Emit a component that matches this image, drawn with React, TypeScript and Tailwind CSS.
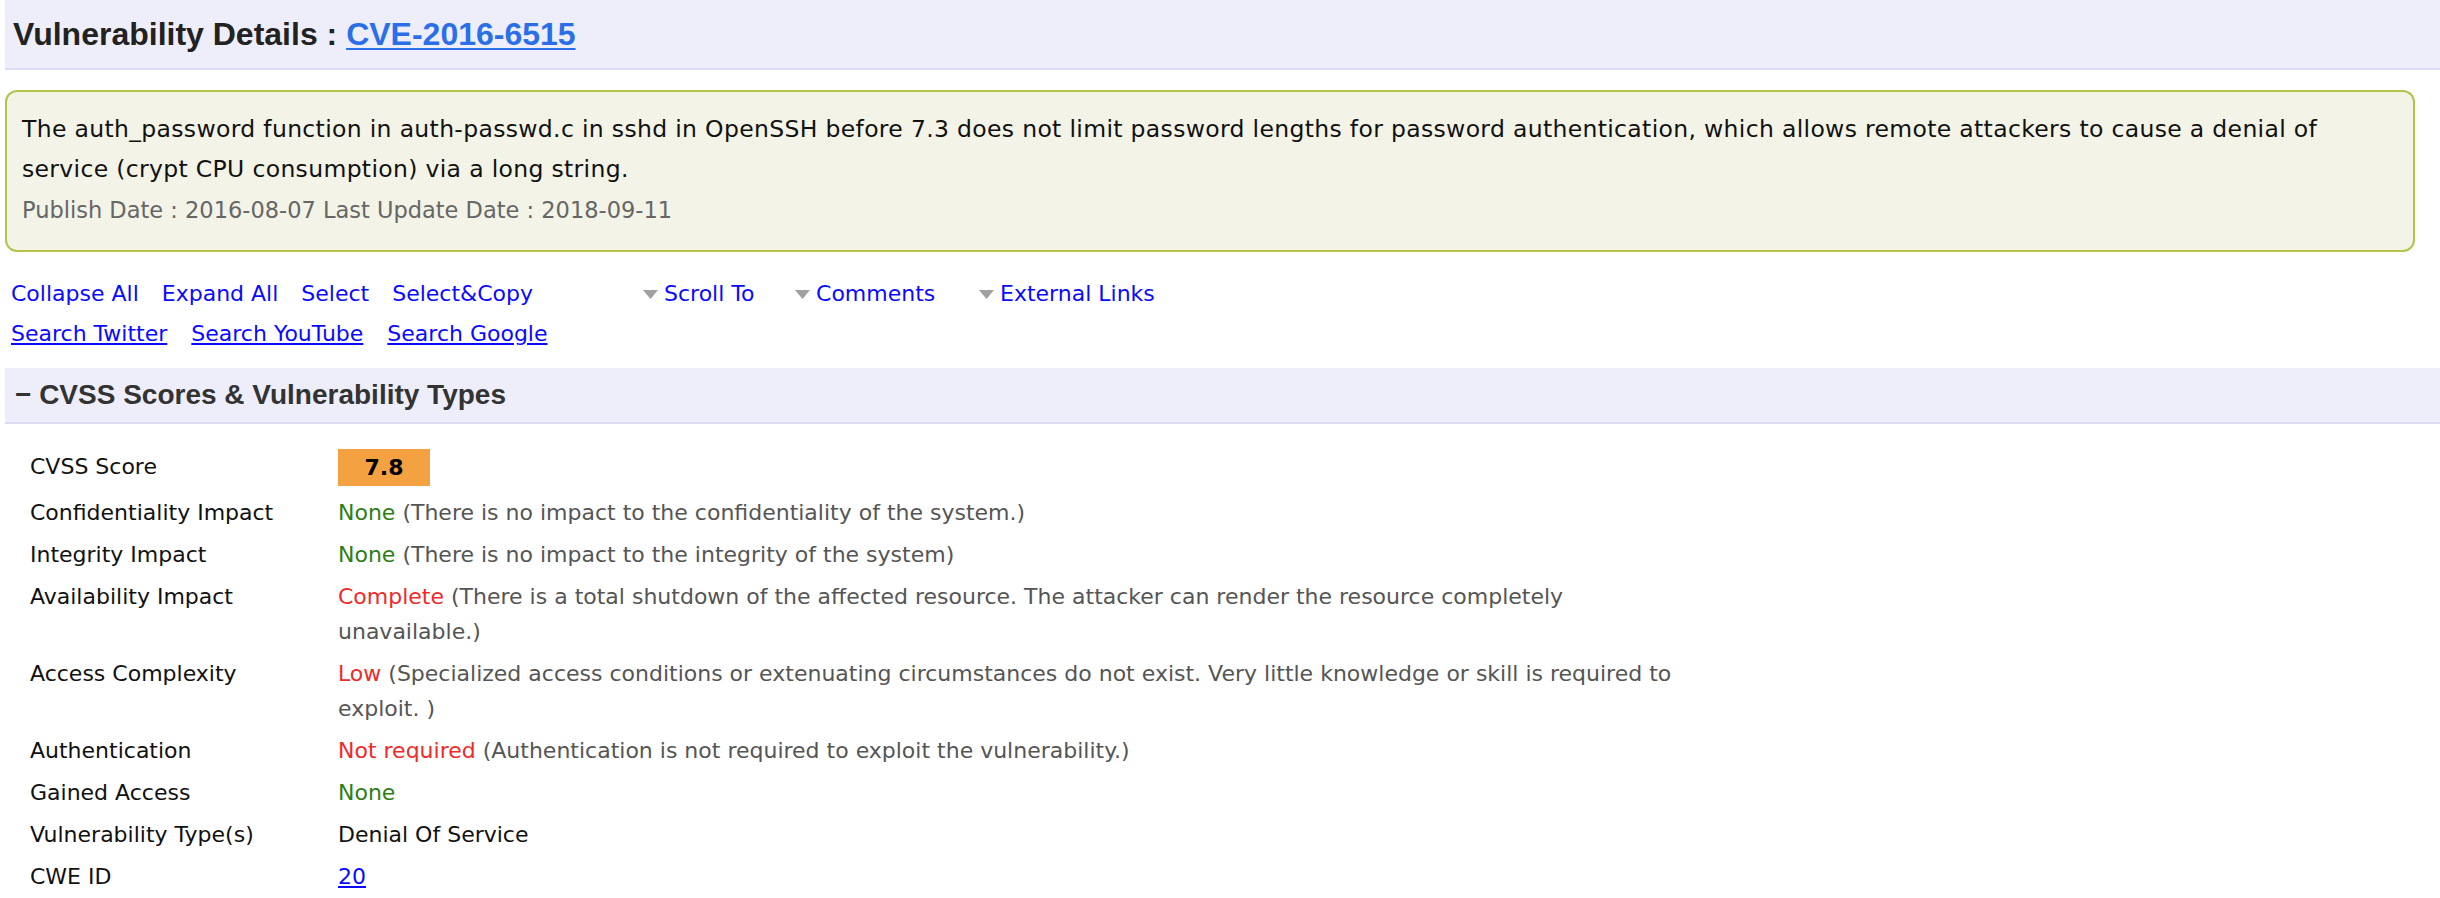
import React from "react";

const Tri = () => (
  <svg width="15" height="9" viewBox="0 0 15 9" className="mr-[6px] shrink-0">
    <polygon points="0,0 15,0 7.5,9" fill="#a0a0a0" />
  </svg>
);

type Row = { label: string; value: React.ReactNode };

const rows: Row[] = [
  {
    label: "Confidentiality Impact",
    value: (
      <>
        <span className="text-[#2e7d16]">None</span> (There is no impact to the confidentiality of the system.)
      </>
    ),
  },
  {
    label: "Integrity Impact",
    value: (
      <>
        <span className="text-[#2e7d16]">None</span> (There is no impact to the integrity of the system)
      </>
    ),
  },
  {
    label: "Availability Impact",
    value: (
      <>
        <span className="text-[#ee2a2a]">Complete</span> (There is a total shutdown of the affected resource. The attacker can render the resource completely unavailable.)
      </>
    ),
  },
  {
    label: "Access Complexity",
    value: (
      <>
        <span className="text-[#ee2a2a]">Low</span> (Specialized access conditions or extenuating circumstances do not exist. Very little knowledge or skill is required to exploit. )
      </>
    ),
  },
  {
    label: "Authentication",
    value: (
      <>
        <span className="text-[#ee2a2a]">Not required</span> (Authentication is not required to exploit the vulnerability.)
      </>
    ),
  },
  {
    label: "Gained Access",
    value: <span className="text-[#2e7d16]">None</span>,
  },
  {
    label: "Vulnerability Type(s)",
    value: <span className="text-[#111]">Denial Of Service</span>,
  },
  {
    label: "CWE ID",
    value: (
      <a href="#" className="text-[#0a0aff] underline">
        20
      </a>
    ),
  },
];

export default function App() {
  return (
    <div className="min-h-screen bg-white pl-[5px] font-['DejaVu_Sans',Verdana,sans-serif] text-[22px] text-[#111]">
      {/* Title bar */}
      <div className="flex h-[70px] items-center border-b-2 border-[#dcdcf5] bg-[#eeeefa] pl-[8px]">
        <h1 className="font-['Liberation_Sans',Arial,sans-serif] text-[32px] font-bold leading-none text-[#222]">
          Vulnerability Details :{" "}
          <a href="#" className="text-[#2a6fe8] underline decoration-2 underline-offset-[3px]">
            CVE-2016-6515
          </a>
        </h1>
      </div>

      {/* Summary box */}
      <div className="mr-[25px] mt-[20px] rounded-[12px] border-2 border-[#b4c44a] bg-[#f3f3e8] pb-[19px] pl-[15px] pr-[60px] pt-[17px]">
        <div className="text-[23.5px] leading-[40px] tracking-[0.33px] text-[#111]">
          The auth_password function in auth-passwd.c in sshd in OpenSSH before 7.3 does not limit password lengths for password authentication, which allows remote attackers to cause a denial of service (crypt CPU consumption) via a long string.
        </div>
        <div className="text-[22.5px] leading-[42px] text-[#666]">
          Publish Date : 2016-08-07 Last Update Date : 2018-09-11
        </div>
      </div>

      {/* Links */}
      <div className="mt-[22px] pl-[6px] leading-[40px] text-[#0a0aff]">
        <div className="flex items-center">
          <a href="#" className="mr-[23px]">Collapse All</a>
          <a href="#" className="mr-[23px]">Expand All</a>
          <a href="#" className="mr-[23px]">Select</a>
          <a href="#">Select&amp;Copy</a>
          <div className="ml-[110px] flex w-[152px] items-center">
            <Tri />
            <a href="#">Scroll To</a>
          </div>
          <div className="flex w-[184px] items-center">
            <Tri />
            <a href="#">Comments</a>
          </div>
          <div className="flex items-center">
            <Tri />
            <a href="#">External Links</a>
          </div>
        </div>
        <div className="flex items-center">
          <a href="#" className="mr-[24px] underline">Search Twitter</a>
          <a href="#" className="mr-[24px] underline">Search YouTube</a>
          <a href="#" className="underline">Search Google</a>
        </div>
      </div>

      {/* Section header */}
      <div className="mt-[14px] flex h-[56px] items-center border-b-2 border-[#dcdcf5] bg-[#eeeefa] pl-[10px]">
        <h2 className="font-['Liberation_Sans',Arial,sans-serif] text-[28px] font-bold leading-none text-[#333]">
          − CVSS Scores &amp; Vulnerability Types
        </h2>
      </div>

      {/* Table */}
      <div className="mt-[20px] pl-[25px]">
        <div className="grid grid-cols-[308px_1fr] items-center py-[5px]">
          <div className="-mt-[3px] leading-[35px]">CVSS Score</div>
          <div className="flex h-[37px] w-[92px] items-center justify-center bg-[#f4a142] font-bold text-black">
            7.8
          </div>
        </div>
        {rows.map((r) => (
          <div key={r.label} className="grid grid-cols-[308px_1fr] items-start py-[3.5px] leading-[35px]">
            <div className="text-[#111]">{r.label}</div>
            <div className="max-w-[1360px] text-[#555]">{r.value}</div>
          </div>
        ))}
      </div>
    </div>
  );
}
